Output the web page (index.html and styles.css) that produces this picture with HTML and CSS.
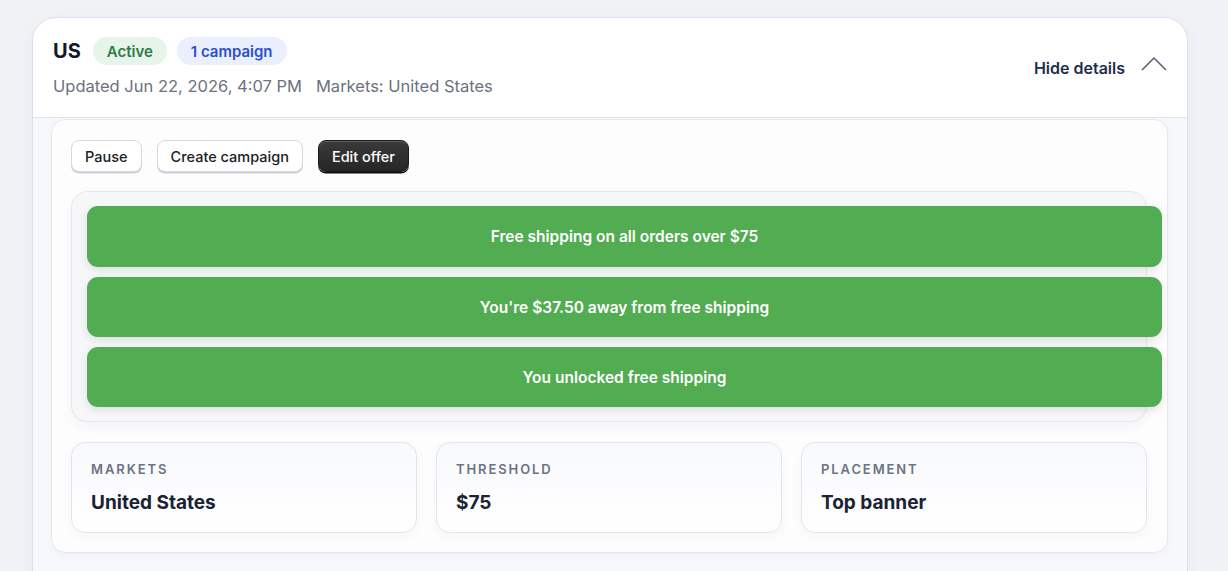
FILE: index.html
```html
<!DOCTYPE html>
<html lang="en">
<head>
  <meta charset="UTF-8">
  <title>Shipping offers</title>
  <link rel="stylesheet" href="styles.css">
</head>
<body>

<div class="offer-card">
  <div class="offer-header">
    <div class="offer-head-left">
      <div class="offer-title-row">
        <span class="offer-title">US</span>
        <span class="pill pill-green">Active</span>
        <span class="pill pill-blue">1 campaign</span>
      </div>
      <div class="offer-meta">
        <span>Updated Jun 22, 2026, 4:07 PM</span>
        <span>Markets: United States</span>
      </div>
    </div>
    <button class="toggle-btn">
      Hide details
      <svg width="26" height="16" viewBox="0 0 26 16" fill="none">
        <path d="M1 14 L13 2 L25 14" stroke="#5b6478" stroke-width="1.6" stroke-linejoin="round"/>
      </svg>
    </button>
  </div>

  <div class="offer-body">
    <div class="details-panel">
      <div class="actions">
        <button class="btn">Pause</button>
        <button class="btn">Create campaign</button>
        <button class="btn btn-dark">Edit offer</button>
      </div>

      <div class="preview">
        <div class="bar">Free shipping on all orders over $75</div>
        <div class="bar">You're $37.50 away from free shipping</div>
        <div class="bar">You unlocked free shipping</div>
      </div>

      <div class="stats">
        <div class="stat">
          <div class="stat-label">Markets</div>
          <div class="stat-value">United States</div>
        </div>
        <div class="stat">
          <div class="stat-label">Threshold</div>
          <div class="stat-value">$75</div>
        </div>
        <div class="stat">
          <div class="stat-label">Placement</div>
          <div class="stat-value">Top banner</div>
        </div>
      </div>
    </div>
  </div>
</div>

</body>
</html>
```

FILE: styles.css
```css
html, body {
  margin: 0;
  padding: 0;
  height: 100%;
  overflow: hidden;
  font-family: Inter, "Noto Sans", sans-serif;
  background-color: #f1f2f6;
  color: #111827;
}

body {
  padding: 17px 40px 0 32px;
}

.offer-card {
  background-color: #f7f8fc;
  border: 1.5px solid #dcdcf2;
  border-radius: 24px;
  overflow: hidden;
  box-shadow: 0 6px 20px rgba(40, 40, 90, 0.04);
}

.offer-header {
  background-color: #fff;
  display: flex;
  justify-content: space-between;
  align-items: center;
  padding: 19px 20px 20px 20px;
  border-bottom: 1px solid #e3e5ee;
}

.offer-title-row {
  display: flex;
  align-items: center;
  gap: 10px;
}

.offer-title {
  font-size: 20px;
  font-weight: 700;
  color: #111827;
  margin-right: 2px;
}

.pill {
  display: inline-flex;
  align-items: center;
  height: 28px;
  padding: 0 14px;
  border-radius: 14px;
  font-size: 15px;
  font-weight: 600;
}

.pill-green {
  background-color: #e7f4ea;
  color: #2f7a48;
}

.pill-blue {
  background-color: #e9effd;
  color: #2e4fd1;
}

.offer-meta {
  margin-top: 10px;
  display: flex;
  gap: 14px;
  font-size: 16.5px;
  color: #6b7280;
  line-height: 22px;
}

.toggle-btn {
  display: flex;
  align-items: center;
  gap: 16px;
  background: none;
  border: none;
  font-family: inherit;
  font-size: 16px;
  font-weight: 600;
  color: #1f2d4d;
  cursor: pointer;
  padding: 0;
  margin-top: 2px;
}

.toggle-btn svg {
  margin-top: -8px;
}

.offer-body {
  padding: 1px 19px 40px 18px;
}

.details-panel {
  background-color: #fdfdfe;
  border: 1px solid #e6e8ee;
  border-radius: 14px;
  padding: 20px 20px 19px 19px;
  box-shadow: 0 2px 8px rgba(20, 20, 60, 0.03);
}

.actions {
  display: flex;
  gap: 15px;
}

.btn {
  height: 32px;
  padding: 0 13px;
  background-color: #fff;
  border: 1px solid #d6d8dd;
  border-radius: 8px;
  box-shadow: 0 1.5px 0 #cfd1d6;
  font-family: inherit;
  font-size: 14.5px;
  font-weight: 500;
  color: #202223;
  cursor: pointer;
}

.btn-dark {
  background: linear-gradient(#3a3a3a, #262626);
  border-color: #1a1a1a;
  color: #fff;
  box-shadow: inset 0 1px 0 rgba(255, 255, 255, 0.2), 0 1.5px 0 #0c0c0c;
}

.preview {
  margin-top: 19px;
  border: 1px solid #e5e7ec;
  border-radius: 16px;
  background-color: #f6f7f9;
  padding: 14px 0 14px 15px;
  display: flex;
  flex-direction: column;
  gap: 10px;
  box-shadow: 0 6px 14px rgba(20, 20, 60, 0.04);
}

/* bars are full width plus their own padding, so they run past the frame */
.bar {
  width: 100%;
  padding: 0 8px;
  height: 61px;
  display: flex;
  align-items: center;
  justify-content: center;
  background-color: #52ac52;
  border-radius: 11px;
  color: #fff;
  font-size: 15.5px;
  font-weight: 600;
  box-shadow: 0 3px 8px rgba(0, 0, 0, 0.1);
  box-sizing: content-box;
}

.bar + .bar {
  height: 60px;
}

.stats {
  margin-top: 20px;
  display: grid;
  grid-template-columns: repeat(3, 1fr);
  gap: 19px;
}

.stat {
  height: 91px;
  box-sizing: border-box;
  padding: 18px 19px 0 19px;
  border: 1px solid #e2e5ee;
  border-radius: 14px;
  background: linear-gradient(#f8f9fc, #fff);
  box-shadow: 0 4px 12px rgba(20, 20, 60, 0.03);
}

.stat-label {
  font-size: 13px;
  font-weight: 600;
  letter-spacing: 1.9px;
  text-transform: uppercase;
  color: #6b7385;
  line-height: 16px;
}

.stat-value {
  margin-top: 15px;
  font-size: 19px;
  font-weight: 700;
  color: #1a2233;
  line-height: 22px;
}
```
